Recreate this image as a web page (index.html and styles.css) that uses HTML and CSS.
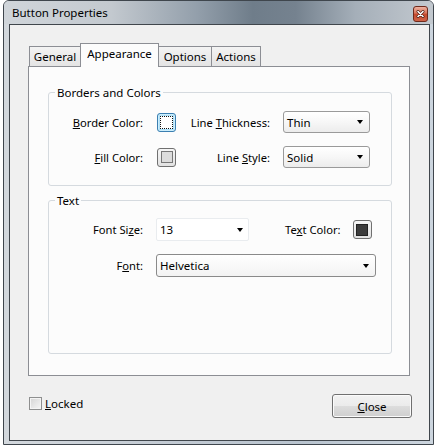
FILE: index.html
```html
<!DOCTYPE html>
<html>
<head>
<meta charset="utf-8">
<title>Button Properties</title>
<link rel="stylesheet" href="styles.css">
</head>
<body>
<div class="window">
  <div class="titlebar">
    <span class="title">Button Properties</span>
    <span class="tclose">
      <svg width="15" height="16" viewBox="0 0 15 16">
        <defs>
          <linearGradient id="rg" x1="0" y1="0" x2="0" y2="1">
            <stop offset="0" stop-color="#efb7a6"/>
            <stop offset="0.45" stop-color="#d9735a"/>
            <stop offset="0.5" stop-color="#c4482c"/>
            <stop offset="1" stop-color="#d0654a"/>
          </linearGradient>
        </defs>
        <rect x="0.5" y="0.5" width="14" height="15" rx="2.5" fill="url(#rg)" stroke="#6e2a1c"/>
        <path d="M5 5.5 L10 10.5 M10 5.5 L5 10.5" stroke="#4a1a10" stroke-width="3" stroke-linecap="round"/>
        <path d="M5 5.5 L10 10.5 M10 5.5 L5 10.5" stroke="#ffffff" stroke-width="1.6" stroke-linecap="round"/>
      </svg>
    </span>
  </div>
  <div class="client">
    <div class="tabs">
      <div class="tabstrip">
        <div class="tab t-general">General</div>
        <div class="tab t-appearance active">Appearance</div>
        <div class="tab t-options">Options</div>
        <div class="tab t-actions">Actions</div>
      </div>
      <div class="panel">
        <fieldset class="group g1">
          <legend>Borders and Colors</legend>
          <div class="grid1">
            <span class="lbl"><u>B</u>order Color:</span>
            <span class="swatch focused"><span class="dots"></span></span>
            <span class="lbl">Line <u>T</u>hickness:</span>
            <span class="select s-small"><span class="val">Thin</span><i class="arrow"></i></span>

            <span class="lbl"><u>F</u>ill Color:</span>
            <span class="swatch"><span class="chip chip-light"></span></span>
            <span class="lbl">Line <u>S</u>tyle:</span>
            <span class="select s-small"><span class="val">Solid</span><i class="arrow"></i></span>
          </div>
        </fieldset>
        <fieldset class="group g2">
          <legend>Text</legend>
          <div class="row r1">
            <span class="lbl lblw">Font Si<u>z</u>e:</span>
            <span class="combo"><span class="val">13</span><i class="arrow"></i></span>
            <span class="lbl tc">Te<u>x</u>t Color:</span>
            <span class="swatch"><span class="chip chip-dark"></span></span>
          </div>
          <div class="row r2">
            <span class="lbl lblw">F<u>o</u>nt:</span>
            <span class="select s-wide"><span class="val">Helvetica</span><i class="arrow"></i></span>
          </div>
        </fieldset>
      </div>
    </div>
    <div class="footer">
      <label class="check"><span class="box"></span><span><u>L</u>ocked</span></label>
      <span class="button"><u>C</u>lose</span>
    </div>
  </div>
</div>
</body>
</html>
```

FILE: styles.css
```css
* { box-sizing: border-box; }

html, body {
  margin: 0;
  padding: 0;
  background: #ffffff;
}

body {
  width: 435px;
  height: 448px;
  font-family: "Segoe UI", "Noto Sans", "Open Sans", sans-serif;
  font-size: 11px;
  color: #000;
}

.window {
  margin-left: 3px;
  width: 431px;
  height: 445px;
  border: 1px solid #3f464d;
  border-radius: 6px 6px 0 0;
  background: linear-gradient(to right, #d3d8dd 0%, #c2cad3 40%, #b9c4cf 70%, #ccd5de 100%);
  display: flex;
  flex-direction: column;
  padding: 0 3px 3px 5px;
}

.titlebar {
  height: 23px;
  margin: 0 -3px 0 -5px;
  padding: 0 5px 0 8px;
  display: flex;
  align-items: center;
  justify-content: space-between;
  border-radius: 5px 5px 0 0;
  background: linear-gradient(to right, #d0d5da 0%, #c3c9cf 25%, #939fab 45%, #6f7d8a 58%, #75828f 68%, #a5afb9 82%, #c3c9cf 100%);
}

.title {
  font-size: 11.5px;
  color: #000;
}

.tclose {
  display: flex;
  margin-top: 2px;
}

.client {
  flex: 1;
  border: 1px solid #40464c;
  background: #f0f0f0;
  padding: 18px 19px 0 18px;
  display: flex;
  flex-direction: column;
}

.tabstrip {
  height: 23px;
  display: flex;
  align-items: flex-end;
  padding-left: 1px;
  position: relative;
  z-index: 1;
}

.tab {
  height: 20px;
  border: 1px solid #8c8e94;
  border-bottom: none;
  background: linear-gradient(#f3f3f3, #e4e4e4);
  display: flex;
  align-items: center;
  justify-content: center;
  margin-left: -1px;
  font-size: 11.5px;
}

.t-general { width: 52px; margin-left: 0; }
.t-appearance { width: 79px; }
.t-options { width: 54px; }
.t-actions { width: 50px; }

.tab.active {
  height: 24px;
  margin-bottom: -1px;
  background: #fcfcfc;
  position: relative;
  z-index: 2;
  align-items: flex-start;
  padding-top: 2px;
}

.panel {
  height: 310px;
  border: 1px solid #8c8e94;
  background: #fcfcfc;
  padding: 0 17px 0 19px;
  display: flex;
  flex-direction: column;
}

.group {
  margin: 0;
  border: 1px solid #d5dadf;
  border-radius: 3px;
  padding: 0;
  min-width: 0;
}

.group legend {
  margin-left: 6px;
  padding: 0 2px;
  font-size: 11.5px;
  line-height: 15px;
}

.g1 {
  margin-top: 18px;
  padding-top: 11px;
  padding-bottom: 17px;
}

.g2 {
  margin-top: 7px;
  padding-top: 10px;
  height: 161px;
}

.grid1 {
  display: grid;
  grid-template-columns: 94px 33px 94px 100px;
  grid-auto-rows: 22px;
  row-gap: 13px;
  align-items: center;
}

.lbl {
  font-size: 11.2px;
  white-space: nowrap;
  text-align: right;
}

.grid1 .swatch { justify-self: end; }
.grid1 .select { justify-self: end; }

.swatch {
  width: 19px;
  height: 19px;
  border: 1px solid #707070;
  border-radius: 3px;
  background: linear-gradient(#f6f6f6, #e2e2e2);
  display: flex;
  align-items: center;
  justify-content: center;
}

.swatch.focused {
  border-color: #3c7fb1;
  background: #aee0f8;
  box-shadow: inset 0 0 0 1px #cdeefc;
}

.dots {
  width: 13px;
  height: 13px;
  border: 1px dotted #111;
  background: #ffffff;
}

.chip {
  width: 12px;
  height: 12px;
  border: 1px solid #777;
}

.chip-light { background: #dcdcdc; }
.chip-dark { background: #3c3c3c; border-color: #222; }

.select {
  height: 22px;
  border: 1px solid #9a9a9a;
  border-radius: 3px;
  background: linear-gradient(#ffffff 0%, #f7f7f7 50%, #ececec 100%);
  display: flex;
  align-items: center;
  justify-content: space-between;
  padding: 0 6px 0 3px;
  font-size: 11.5px;
}

.s-small { width: 87px; }
.s-wide { width: 220px; height: 23px; border-color: #8a8a8a; background: linear-gradient(#ffffff, #f3f3f3); }

.arrow {
  width: 0;
  height: 0;
  border-left: 3.5px solid transparent;
  border-right: 3.5px solid transparent;
  border-top: 4px solid #000;
}

.row {
  display: flex;
  align-items: center;
}

.r1 { height: 23px; }
.r2 { height: 23px; margin-top: 13px; }

.lblw {
  width: 94px;
  margin-right: 13px;
}

.combo {
  width: 93px;
  height: 23px;
  border: 1px solid #e9ecef;
  border-radius: 2px;
  background: #ffffff;
  display: flex;
  align-items: center;
  justify-content: space-between;
  padding: 0 5px 0 3px;
  font-size: 11.5px;
}

.tc {
  margin-left: 36px;
  margin-right: 12px;
}

.footer {
  margin-top: 18px;
  margin-right: -2px;
  display: flex;
  justify-content: space-between;
  align-items: flex-start;
}

.check {
  display: flex;
  align-items: center;
  gap: 3px;
  margin-top: 2px;
  margin-left: 1px;
  font-size: 11.5px;
}

.box {
  width: 13px;
  height: 13px;
  border: 1px solid #8e8f8f;
  background: linear-gradient(135deg, #d4d4d4, #f6f6f6);
  box-shadow: inset 0 0 0 1px #f4f4f4;
}

.button {
  width: 80px;
  height: 24px;
  border: 1px solid #707070;
  border-radius: 3px;
  background: linear-gradient(#f2f2f2 0%, #ebebeb 50%, #dddddd 50%, #cfcfcf 100%);
  box-shadow: inset 0 0 0 1px #fbfbfb;
  display: flex;
  align-items: center;
  justify-content: center;
  font-size: 11.5px;
}
```
